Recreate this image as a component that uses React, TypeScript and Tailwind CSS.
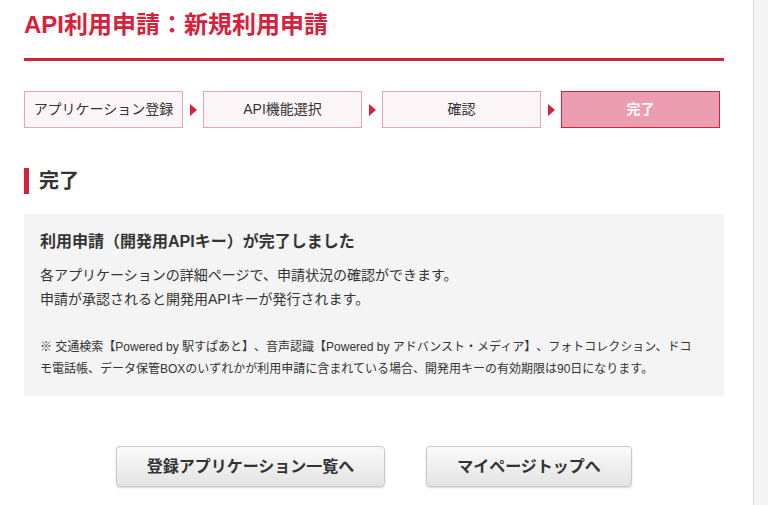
const steps = [
  { label: "アプリケーション登録", active: false },
  { label: "API機能選択", active: false },
  { label: "確認", active: false },
  { label: "完了", active: true },
];

function StepArrow() {
  return (
    <div className="flex w-[20px] items-center justify-center">
      <svg width="7" height="12" viewBox="0 0 7 12" aria-hidden="true">
        <path d="M0 0 L7 6 L0 12 Z" fill="#d7213b" />
      </svg>
    </div>
  );
}

export default function App() {
  return (
    <div
      className="flex h-[505px] w-[768px] overflow-hidden bg-white text-[#333] [text-spacing-trim:space-all]"
      style={{ fontFamily: '"Liberation Sans", "Noto Sans CJK JP", sans-serif' }}
    >
      <main className="flex-1 pl-[24px] pr-[29px] pt-[7px]">
        <div className="w-[700px]">
          <h1 className="border-b-[3px] border-[#d7213b] pb-[15px] text-[24px] font-bold leading-[36px] text-[#d7213b]">
            API利用申請：新規利用申請
          </h1>

          <ol className="mt-[30px] flex">
            {steps.map((step, i) => (
              <li key={step.label} className="flex">
                {i > 0 && <StepArrow />}
                <div
                  className={
                    step.active
                      ? "flex h-[37px] w-[159px] items-center justify-center border border-[#d0213d] bg-[#ec9db1] text-[14px] font-bold text-white"
                      : "flex h-[37px] w-[159px] items-center justify-center border border-[#eba3b6] bg-[#fdf6f8] text-[14px] text-[#333]"
                  }
                >
                  {step.label}
                </div>
              </li>
            ))}
          </ol>

          <h2 className="mt-[40px] border-l-[5px] border-[#d7213b] pl-[10px] text-[20px] font-bold leading-[26px] text-[#333]">
            完了
          </h2>

          <section className="mt-[20px] bg-[#f4f4f4] px-[16px] pb-[16px] pt-[16px]">
            <p className="text-[16px] font-bold leading-[24px]">利用申請（開発用APIキー）が完了しました</p>
            <p className="mt-[9px] text-[14px] leading-[24px]">
              各アプリケーションの詳細ページで、申請状況の確認ができます。
              <br />
              申請が承認されると開発用APIキーが発行されます。
            </p>
            <p className="mt-[25px] text-[12px] leading-[22px]">
              ※ 交通検索【Powered by 駅すぱあと】、音声認識【Powered by アドバンスト・メディア】、フォトコレクション、ドコ
              <br />
              モ電話帳、データ保管BOXのいずれかが利用申請に含まれている場合、開発用キーの有効期限は90日になります。
            </p>
          </section>

          <div className="mt-[50px] flex justify-center gap-[41px]">
            <button
              type="button"
              className="h-[41px] w-[269px] rounded-[4px] border border-[#c9c9c9] bg-gradient-to-b from-[#fbfbfb] to-[#e3e3e3] text-[16px] font-bold text-[#333] shadow-[0_1px_2px_rgba(0,0,0,0.15)]"
            >
              登録アプリケーション一覧へ
            </button>
            <button
              type="button"
              className="h-[41px] w-[206px] rounded-[4px] border border-[#c9c9c9] bg-gradient-to-b from-[#fbfbfb] to-[#e3e3e3] text-[16px] font-bold text-[#333] shadow-[0_1px_2px_rgba(0,0,0,0.15)]"
            >
              マイページトップへ
            </button>
          </div>
        </div>
      </main>
      <div className="w-[15px] shrink-0 border-l border-[#d4d4d4] bg-[#f4f4f4]" />
    </div>
  );
}
